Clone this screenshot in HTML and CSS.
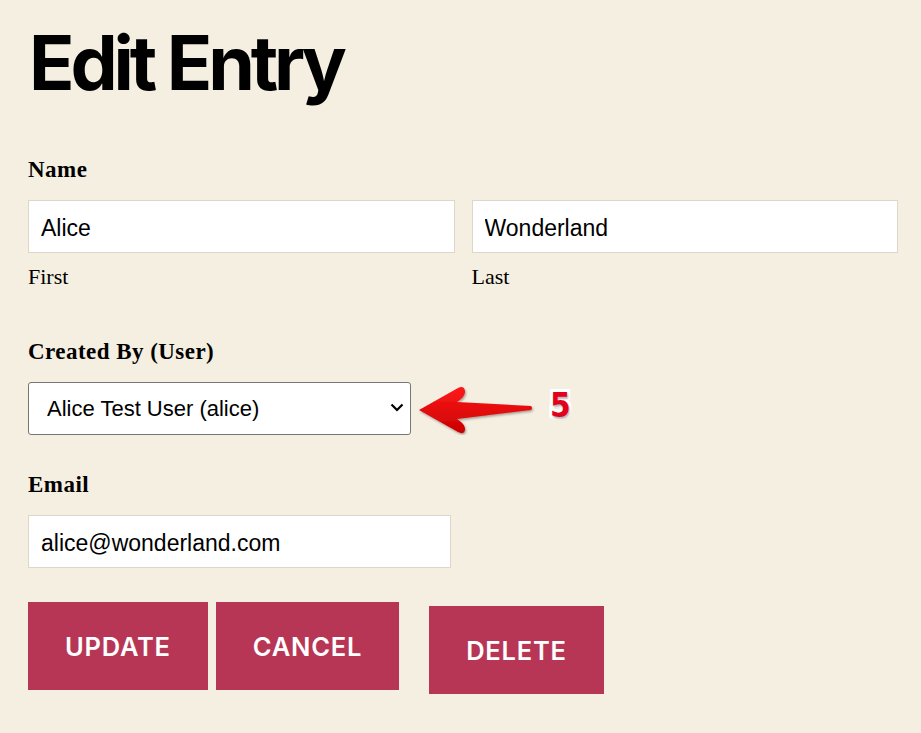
FILE: index.html
```html
<!DOCTYPE html>
<html lang="en">
<head>
<meta charset="utf-8">
<title>Edit Entry</title>
<link rel="stylesheet" href="styles.css">
</head>
<body>
<main class="page">
  <h1 class="title">Edit Entry</h1>

  <form class="entry-form">
    <div class="field">
      <label class="field-label">Name</label>
      <div class="name-row">
        <div class="name-part">
          <input class="text-input" type="text" value="Alice">
          <span class="sub-label">First</span>
        </div>
        <div class="name-part">
          <input class="text-input" type="text" value="Wonderland">
          <span class="sub-label">Last</span>
        </div>
      </div>
    </div>

    <div class="field field-user">
      <label class="field-label">Created By (User)</label>
      <div class="select-row">
        <select class="user-select">
          <option>Alice Test User (alice)</option>
        </select>
        <svg class="select-chevron" width="14" height="9" viewBox="0 0 14 9" aria-hidden="true">
          <path d="M1.5 1.5 L7 7 L12.5 1.5" fill="none" stroke="#000" stroke-width="2.2" stroke-linecap="butt" stroke-linejoin="miter"/>
        </svg>
        <div class="callout">
          <svg class="callout-arrow" width="120" height="52" viewBox="0 0 120 52" aria-hidden="true">
            <defs>
              <linearGradient id="arrowGrad" x1="0" y1="0" x2="0" y2="1">
                <stop offset="0" stop-color="#ff1a1a"/>
                <stop offset="1" stop-color="#c80000"/>
              </linearGradient>
              <filter id="arrowShadow" x="-10%" y="-20%" width="130%" height="150%">
                <feDropShadow dx="1" dy="1.5" stdDeviation="1.2" flood-color="#000" flood-opacity="0.35"/>
              </filter>
            </defs>
            <path filter="url(#arrowShadow)" fill="url(#arrowGrad)"
              d="M2 27 L41 5 Q47 2 48 8 Q48.5 12 44 16 L40 19 L114 23 Q116 25 114 27 L40 36 L44 39 Q48.5 43 48 47 Q47 52 41 49 Z"/>
          </svg>
          <span class="callout-num">5</span>
        </div>
      </div>
    </div>

    <div class="field field-email">
      <label class="field-label">Email</label>
      <input class="text-input email-input" type="text" value="alice@wonderland.com">
    </div>

    <div class="actions">
      <button class="btn" type="button">Update</button>
      <button class="btn" type="button">Cancel</button>
      <button class="btn btn-delete" type="button">Delete</button>
    </div>
  </form>
</main>
</body>
</html>
```

FILE: styles.css
```css
html, body {
  margin: 0;
  padding: 0;
  background: #f4efe1;
}

body {
  color: #000;
  font-family: "Liberation Serif", "Times New Roman", serif;
}

.page {
  padding: 0 23px 0 28px;
}

.title {
  margin: 0 0 0 1px;
  padding-top: 19px;
  font-family: Inter, "Liberation Sans", sans-serif;
  font-weight: 700;
  font-size: 75px;
  line-height: 88px;
  letter-spacing: -0.055em;
}

.entry-form {
  display: flex;
  flex-direction: column;
  margin-top: 50px;
}

.field {
  display: flex;
  flex-direction: column;
}

.field-label {
  font-family: "Liberation Serif", "Times New Roman", serif;
  font-weight: 700;
  font-size: 23px;
  line-height: 26px;
  letter-spacing: 0.02em;
  margin-bottom: 17px;
}

.name-row {
  display: flex;
  gap: 17px;
}

.name-part {
  flex: 1;
  display: flex;
  flex-direction: column;
}

.text-input {
  box-sizing: border-box;
  height: 53px;
  width: 100%;
  margin: 0;
  border: 1px solid #dcd7ca;
  background: #fff;
  padding: 3px 12px 0;
  font-family: "Liberation Sans", Arial, sans-serif;
  font-size: 23px;
  color: #000;
  outline: none;
}

.sub-label {
  margin-top: 11px;
  font-size: 22px;
  line-height: 26px;
}

.field-user {
  margin-top: 49px;
}

.select-row {
  position: relative;
  display: flex;
  align-items: center;
}

.user-select {
  box-sizing: border-box;
  width: 383px;
  height: 53px;
  margin: 0;
  padding: 0 40px 0 18px;
  border: 1px solid #767676;
  border-radius: 3px;
  background-color: #fff;
  -webkit-appearance: none;
  appearance: none;
  font-family: "Liberation Sans", Arial, sans-serif;
  font-size: 22px;
  color: #000;
}

.select-chevron {
  position: absolute;
  left: 362px;
  top: 21px;
  pointer-events: none;
}

.callout {
  position: absolute;
  left: 388px;
  top: 0;
  height: 53px;
  width: 170px;
}

.callout-arrow {
  position: absolute;
  left: 1px;
  top: 1px;
}

.callout-num {
  position: absolute;
  left: 134px;
  top: 0;
  font-family: "DejaVu Sans Condensed", "DejaVu Sans", sans-serif;
  font-weight: 700;
  font-size: 33px;
  line-height: 48px;
  color: #e3001b;
  -webkit-text-stroke: 6px #fff;
  paint-order: stroke fill;
  text-shadow: 1px 2px 2px rgba(0, 0, 0, 0.3);
}

.field-email {
  margin-top: 37px;
}

.email-input {
  width: 423px;
}

.actions {
  display: flex;
  align-items: flex-start;
  margin-top: 34px;
  gap: 8px;
}

.btn {
  box-sizing: border-box;
  height: 88px;
  margin: 0;
  border: none;
  border-radius: 0;
  background: #b73656;
  color: #fff;
  font-family: Inter, "Liberation Sans", sans-serif;
  font-weight: 600;
  font-size: 25.5px;
  letter-spacing: 0.03em;
  text-transform: uppercase;
  padding: 0 37px;
  cursor: pointer;
}

.btn-delete {
  margin-top: 4px;
  margin-left: 22px;
}
```
